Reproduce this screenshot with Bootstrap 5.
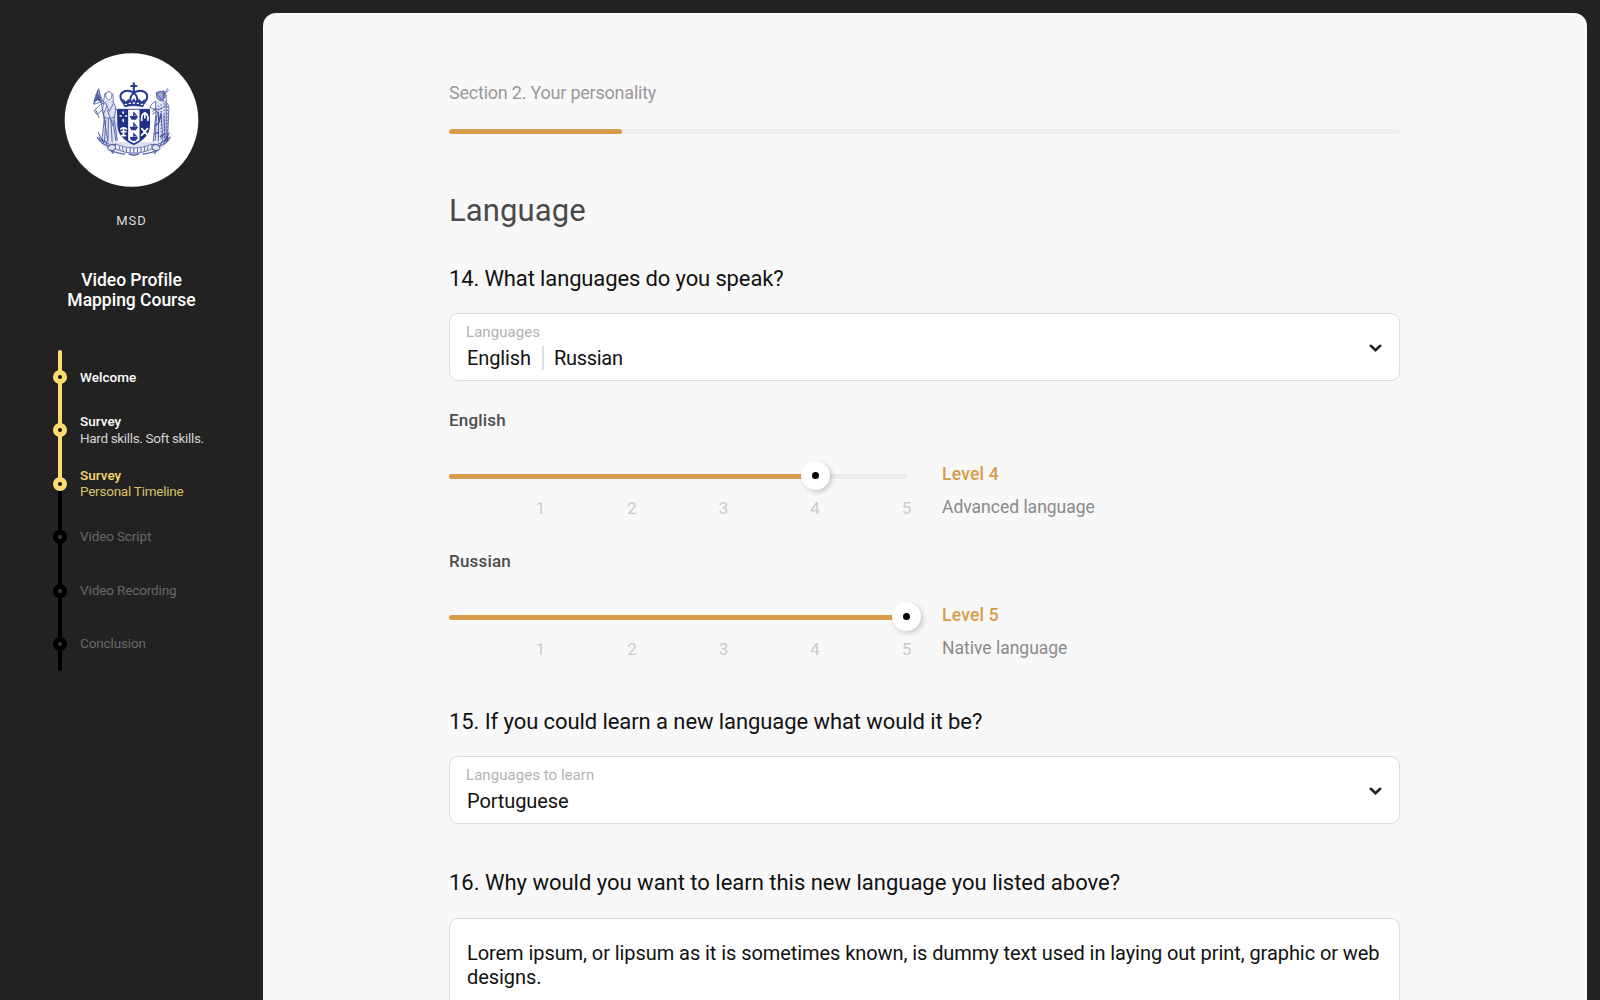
<!DOCTYPE html>
<html lang="en">
<head>
<meta charset="utf-8">
<meta name="viewport" content="width=device-width, initial-scale=1">
<title>Video Profile Mapping Course</title>
<link rel="stylesheet" href="https://cdn.jsdelivr.net/npm/bootstrap@5.3.0/dist/css/bootstrap.min.css">
<style>
  :root { --gold: #d99b4a; --sun: #fcdc6f; --ink: #222; }
  body { font-family: Roboto, "Liberation Sans", sans-serif; background: var(--ink); height: 100vh; overflow: hidden; }
  p, h1, h2, h3 { margin: 0; }

  /* Sidebar */
  .side { width: 263px; padding-top: 53px; }
  .side-head { width: 263px; }
  .crest { width: 135px; height: 134px; overflow: visible; }
  .org { font-size: 13px; line-height: 18px; letter-spacing: 1px; color: #dcdcdc; margin-top: 25px; }
  .course { font-size: 17.5px; line-height: 20.4px; font-weight: 500; margin-top: 39.5px; letter-spacing: -.02px; }
  .steps { margin: 40px 0 0 53px; font-size: 13.5px; line-height: 16.6px; }
  .steps li { height: 53.4px; }
  .steps li > div:last-child { margin-top: -1px; }
  .steps strong { font-weight: 500; letter-spacing: .05px; }
  .rail { width: 14px; margin-right: 13px; }
  .rail::before, .rail::after { content: ""; width: 4.5px; flex: 1; background: currentColor; }
  .steps li:first-child .rail::before { border-radius: 3px 3px 0 0; }
  .steps li:last-child .rail::after { border-radius: 0 0 3px 3px; }
  .rail i { width: 14px; height: 14px; border: 5px solid currentColor; border-radius: 50%; margin: -1px 0; position: relative; }
  .done .rail { color: var(--sun); }
  .done .rail i { background: #111; }
  .todo .rail { color: #000; }
  .todo .rail i { background: #3a3a3a; }
  .current .rail::after { background: #000; }
  .todo { color: #686868; letter-spacing: -.12px; }
  .done { color: #fff; }
  .done span { color: #d4d4d4; letter-spacing: -.34px; }
  .done.current { color: #f9da6e; }
  .done.current span { color: #d9c068; letter-spacing: -.24px; }

  /* Content panel */
  .sheet { background: #f8f8f8; border-radius: 13px 13px 0 0; margin: 13px 13.5px 0 0; padding: 68px 187px 0 186px; }
  .section-name { font-size: 18px; line-height: 24px; letter-spacing: -.22px; color: #999; }
  .survey-progress { height: 5px; margin-top: 23.5px; border-radius: 3px; background: #eee; }
  .survey-progress .progress-bar { background: var(--gold); border-radius: 3px; }
  .topic { font-size: 31px; line-height: 40px; font-weight: 400; color: #4a4a4a; margin-top: 57.5px; letter-spacing: .1px; }
  .question { font-size: 22px; line-height: 28px; font-weight: 400; color: #111; }
  .q-first { letter-spacing: -.13px; margin-top: 33.5px; margin-bottom: -.5px; }
  .q-next { letter-spacing: -.08px; margin-top: 49px; margin-bottom: -.5px; }
  .q-last { letter-spacing: -.01px; margin-top: 45px; margin-bottom: -.5px; }
  .field { border: 1.5px solid #dcdcdc; border-radius: 9px; background: #fff; padding: 7px 17px 0 16px; margin-top: 21px; color: #111; }
  .picker { height: 68px; }
  .picker small { font-size: 15px; line-height: 20px; color: #b3b3b3; letter-spacing: .05px; display: block; margin-top: 1px; }
  .picker .value { font-size: 20px; line-height: 26px; margin: 2.5px 0 0 1px; letter-spacing: -.1px; }
  .value b { font-weight: 400; padding-left: 10px; margin-left: 11px; border-left: 2px solid #ddd; line-height: 20px; letter-spacing: -.3px; }
  .chev { width: 13px; height: 9px; margin-top: 23px; }
  .lang { font-size: 17px; line-height: 24px; font-weight: 500; color: #4d4d4d; letter-spacing: .2px; }
  .lang-first { margin-top: 27px; }
  .lang-next { margin-top: 31px; margin-bottom: -.5px; }
  .rating { margin-top: 28px; }
  .scale { width: 457.5px; margin-right: 35.5px; }
  .track { height: 5px; margin-top: 14px; border-radius: 3px; background: #ececec; }
  .fill { height: 5px; border-radius: 3px; background: var(--gold); }
  .thumb { width: 29px; height: 29px; top: -13px; right: -14.5px; border-radius: 50%; background: #fff; box-shadow: 2px 2px 5px rgba(0,0,0,.2); }
  .thumb::after { content: ""; width: 7px; height: 7px; border-radius: 50%; background: #000; }
  .ticks { font-size: 17px; line-height: 20px; color: #ccc; margin: 19px -45.7px 0 45.7px; }
  .ticks span { flex: 1; text-align: center; }
  .level { font-size: 17.5px; line-height: 24px; font-weight: 500; color: var(--gold); letter-spacing: .22px; margin-top: 2px; }
  .level-note { font-size: 17.5px; line-height: 24px; color: #8a8a8a; margin-top: 9.4px; margin-bottom: -3px; letter-spacing: -.01px; }
  .answer { height: 140px; padding: 22px 17px 0; font-size: 20px; line-height: 24px; letter-spacing: -.07px; }
</style>
</head>
<body class="d-flex">

<aside class="side flex-shrink-0">
  <div class="side-head d-flex flex-column align-items-center text-center">
    <svg class="crest" viewBox="42 39 402 402" role="img" aria-label="Coat of arms">
      <circle cx="243" cy="240" r="200.5" fill="#fff"/>
      <g fill="none" stroke="#24388f" stroke-linecap="round" stroke-linejoin="round">
        <!-- soft tone behind the engraved figures -->
        <g fill="#5f6fb4" fill-opacity=".2" stroke="none">
          <path d="M166 182h20l10 28 8 94-50 2 6-76z"/>
          <path d="M316 184h24l14 18-2 100-42 2 2-60z"/>
          <path d="M140 288l30 18h160l30-18-20 34-90 24-90-24z"/>
        </g>
        <!-- crown -->
        <g stroke-width="6">
          <path d="M250 130v26M242 138h16"/>
          <path d="M250 158c-22-12-42-2-40 14 1 10 8 14 14 24M250 158c22-12 42-2 40 14-1 10-8 14-14 24M250 158c-10 10-12 22-8 30M250 158c10 10 12 22 8 30"/>
          <path d="M218 178l8 8 8-8 8 10 8-12 8 12 8-10 8 8 8-8-5 22c-18-4-36-4-54 0z" fill="#24388f" stroke-width="2"/>
        </g>
        <path d="M224 193h4M236 190h4M248 189h4M260 190h4M272 193h4" stroke="#fff" stroke-width="4"/>
        <!-- shield -->
        <path d="M202 208h95v48c0 30-22 46-47 58-26-12-48-28-48-58z" fill="#202f86" stroke-width="3"/>
        <path d="M233 209h34v92l-17 9-17-9z" fill="#fff" stroke="none"/>
        <g stroke-width="4" fill="#24388f">
          <path d="M240 230h20l-5 7h-11zM240 262h20l-5 7h-11zM240 293h20l-5 7h-11z"/>
          <path d="M250 217v11M250 219l7 7M250 249v11M250 251l7 7M250 280v11M250 282l7 7"/>
        </g>
        <g stroke="#fff" stroke-width="5">
          <path d="M218 216v4M209 228h3M225 228h3M218 239v5"/>
          <path d="M211 267c4-5 12-5 17 0M219 266v20M213 275h13M214 287h11"/>
          <path d="M274 241c-2-12 0-19 9-23 9 4 11 11 9 23M283 220v14"/>
          <path d="M274 266l18 20M291 266l-18 20"/>
        </g>
        <!-- left supporter with flag -->
        <g stroke-width="2.6" opacity=".8">
          <path d="M145 146l27 156M143 150c-8 14-12 28-13 42M143 151l18 42-12-6-18 5z"/>
          <path d="M141 158l-8 28 8-6 12 6z" fill="#24388f"/>
          <path d="M166 160c3-8 17-7 18 2 1 10-3 18-9 18-7 0-11-10-9-20zM164 160c-5 12-2 18-5 26M187 162c2 12 0 18 2 24"/>
          <path d="M166 184c-8 6-11 18-9 30l5 18-8 72M184 184c9 6 12 16 11 28l-4 22 9 68"/>
          <path d="M157 208l-18 16-8-12 18-18M166 190l10 24 12-22M162 232c8 4 20 4 28 0M171 212l17 46M166 240l-4 64M174 238l-2 68M181 238l4 68M187 240l9 62M168 200l-8 20M196 206l8 10M135 208l10 24"/>
        </g>
        <!-- right supporter with spear -->
        <g stroke-width="2.6" opacity=".82">
          <path d="M351 146l-10 16M354 150l-14 16M340 152l4 14M347 166v140"/>
          <path d="M318 160c4-8 20-8 22 2 0 10-2 18-10 20-8 0-14-12-12-22zM319 158l20-5 5 16-8 14z" fill="#24388f" fill-opacity=".55"/>
          <path d="M316 184c-8 3-15 10-18 18l16 8M338 182c12 4 18 14 17 28l-4 90M316 186c-3 14 2 26 0 40l-8 78M310 206c14 6 28 0 38-14"/>
          <path d="M318 228l-4 74M325 226l-2 78M333 228l4 76M340 226l4 76M306 214l12-8M306 222l12-8"/>
          <path d="M322 216l4 30 6-26M314 256l10-6M312 282l12-5M330 290l12-8" stroke-width="4"/>
        </g>
        <path d="M324 198v100M332 194v106M341 190v110M350 200v96" stroke-width="3" stroke-dasharray="2 8" opacity=".8"/>
        <!-- fern fronds and scroll -->
        <g stroke-width="3.2" opacity=".75">
          <path d="M144 278c8 26 24 36 52 38M356 278c-8 26-24 36-52 38M140 292c10 18 20 24 36 26M360 292c-10 18-20 24-36 26"/>
          <path d="M150 302l-4-10M160 310l-6-12M170 316l-4-12M350 302l4-10M340 310l6-12M330 316l4-12"/>
          <path d="M172 320c14-12 24-8 24 2s-18 14-24 4zM328 320c-14-12-24-8-24 2s18 14 24 4z"/>
          <path d="M196 312c34 16 74 16 108 0v14c-34 18-74 18-108 0z" fill="#fff" stroke-width="2.5"/>
          <path d="M206 320l3 10M216 322l2 11M227 325l1 11M239 326v11M250 326v12M261 326v11M272 325l-1 11M283 322l-2 11M293 320l-3 10" stroke-width="3"/>
          <path d="M186 334c14 4 26 8 36 8M314 334c-14 4-26 8-36 8M236 342l14 4 14-4M180 330l8 10M320 330l-8 10" stroke-width="4"/>
        </g>
      </g>
    </svg>
    <p class="org">MSD</p>
    <h1 class="course text-white">Video Profile<br>Mapping Course</h1>
  </div>
  <ul class="steps list-unstyled">
    <li class="done d-flex align-items-center"><div class="rail d-flex flex-column align-items-center align-self-stretch"><i></i></div><strong>Welcome</strong></li>
    <li class="done d-flex align-items-center"><div class="rail d-flex flex-column align-items-center align-self-stretch"><i></i></div><div><strong class="d-block">Survey</strong><span class="d-block">Hard skills. Soft skills.</span></div></li>
    <li class="done current d-flex align-items-center"><div class="rail d-flex flex-column align-items-center align-self-stretch"><i></i></div><div><strong class="d-block">Survey</strong><span class="d-block">Personal Timeline</span></div></li>
    <li class="todo d-flex align-items-center"><div class="rail d-flex flex-column align-items-center align-self-stretch"><i></i></div><div>Video Script</div></li>
    <li class="todo d-flex align-items-center"><div class="rail d-flex flex-column align-items-center align-self-stretch"><i></i></div><div>Video Recording</div></li>
    <li class="todo d-flex align-items-center"><div class="rail d-flex flex-column align-items-center align-self-stretch"><i></i></div><div>Conclusion</div></li>
  </ul>
</aside>

<main class="sheet flex-grow-1 overflow-hidden">
  <p class="section-name">Section 2. Your personality</p>
  <div class="progress survey-progress"><div class="progress-bar" style="width:18.2%"></div></div>

  <h2 class="topic">Language</h2>

  <h3 class="question q-first">14. What languages do you speak?</h3>
  <div class="field picker d-flex justify-content-between">
    <div><small>Languages</small><div class="value">English<b>Russian</b></div></div>
    <svg class="chev" viewBox="0 0 13 9"><path d="M1.8 1.8l4.7 4.4 4.7-4.4" fill="none" stroke="#222" stroke-width="2.6" stroke-linecap="round"/></svg>
  </div>

  <p class="lang lang-first">English</p>
  <div class="rating d-flex">
    <div class="scale">
      <div class="track"><div class="fill position-relative" style="width:80%"><span class="thumb position-absolute d-flex align-items-center justify-content-center"></span></div></div>
      <div class="ticks d-flex"><span>1</span><span>2</span><span>3</span><span>4</span><span>5</span></div>
    </div>
    <div><p class="level">Level 4</p><p class="level-note">Advanced language</p></div>
  </div>

  <p class="lang lang-next">Russian</p>
  <div class="rating d-flex">
    <div class="scale">
      <div class="track"><div class="fill position-relative" style="width:100%"><span class="thumb position-absolute d-flex align-items-center justify-content-center"></span></div></div>
      <div class="ticks d-flex"><span>1</span><span>2</span><span>3</span><span>4</span><span>5</span></div>
    </div>
    <div><p class="level">Level 5</p><p class="level-note">Native language</p></div>
  </div>

  <h3 class="question q-next">15. If you could learn a new language what would it be?</h3>
  <div class="field picker d-flex justify-content-between">
    <div><small>Languages to learn</small><div class="value">Portuguese</div></div>
    <svg class="chev" viewBox="0 0 13 9"><path d="M1.8 1.8l4.7 4.4 4.7-4.4" fill="none" stroke="#222" stroke-width="2.6" stroke-linecap="round"/></svg>
  </div>

  <h3 class="question q-last">16. Why would you want to learn this new language you listed above?</h3>
  <div class="field answer">Lorem ipsum, or lipsum as it is sometimes known, is dummy text used in laying out print, graphic or web designs.</div>
</main>

<script src="https://cdn.jsdelivr.net/npm/bootstrap@5.3.0/dist/js/bootstrap.bundle.min.js"></script>
</body>
</html>
